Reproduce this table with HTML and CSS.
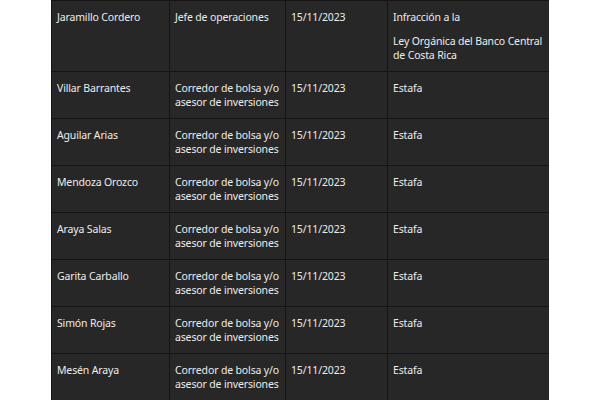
FILE: index.html
```html
<!DOCTYPE html>
<html lang="es">
<head>
<meta charset="utf-8">
<link rel="stylesheet" href="styles.css">
</head>
<body>
<div class="wrap">
<table class="tbl">
<colgroup>
<col class="c1"><col class="c2"><col class="c3"><col class="c4">
</colgroup>
<tbody>
<tr>
<td>Jaramillo Cordero</td>
<td>Jefe de operaciones</td>
<td>15/11/2023</td>
<td><p>Infracción a la</p><p>Ley Orgánica del Banco Central de Costa Rica</p></td>
</tr>
<tr><td>Villar Barrantes</td><td>Corredor de bolsa y/o asesor de inversiones</td><td>15/11/2023</td><td>Estafa</td></tr>
<tr><td>Aguilar Arias</td><td>Corredor de bolsa y/o asesor de inversiones</td><td>15/11/2023</td><td>Estafa</td></tr>
<tr><td>Mendoza Orozco</td><td>Corredor de bolsa y/o asesor de inversiones</td><td>15/11/2023</td><td>Estafa</td></tr>
<tr><td>Araya Salas</td><td>Corredor de bolsa y/o asesor de inversiones</td><td>15/11/2023</td><td>Estafa</td></tr>
<tr><td>Garita Carballo</td><td>Corredor de bolsa y/o asesor de inversiones</td><td>15/11/2023</td><td>Estafa</td></tr>
<tr><td>Simón Rojas</td><td>Corredor de bolsa y/o asesor de inversiones</td><td>15/11/2023</td><td>Estafa</td></tr>
<tr><td>Mesén Araya</td><td>Corredor de bolsa y/o asesor de inversiones</td><td>15/11/2023</td><td>Estafa</td></tr>
</tbody>
</table>
</div>
</body>
</html>
```
FILE: styles.css
```css
html, body {
  margin: 0;
  padding: 0;
  background: #ffffff;
}
.wrap {
  width: 498px;
  margin: 0 auto;
  height: 400px;
  overflow: hidden;
}
.tbl {
  width: 498px;
  border-collapse: collapse;
  table-layout: fixed;
  background: #272727;
  color: #ececec;
  font-family: "Noto Sans", "Open Sans", sans-serif;
  font-size: 10.5px;
  letter-spacing: -0.15px;
  line-height: 14px;
}
.c1 { width: 118px; }
.c2 { width: 116px; }
.c3 { width: 102px; }
.c4 { width: 162px; }
.tbl td {
  border: 1px solid #141414;
  padding: 9px 5px;
  vertical-align: top;
}
.tbl p {
  margin: 0;
}
.tbl p + p {
  margin-top: 10px;
}
```
